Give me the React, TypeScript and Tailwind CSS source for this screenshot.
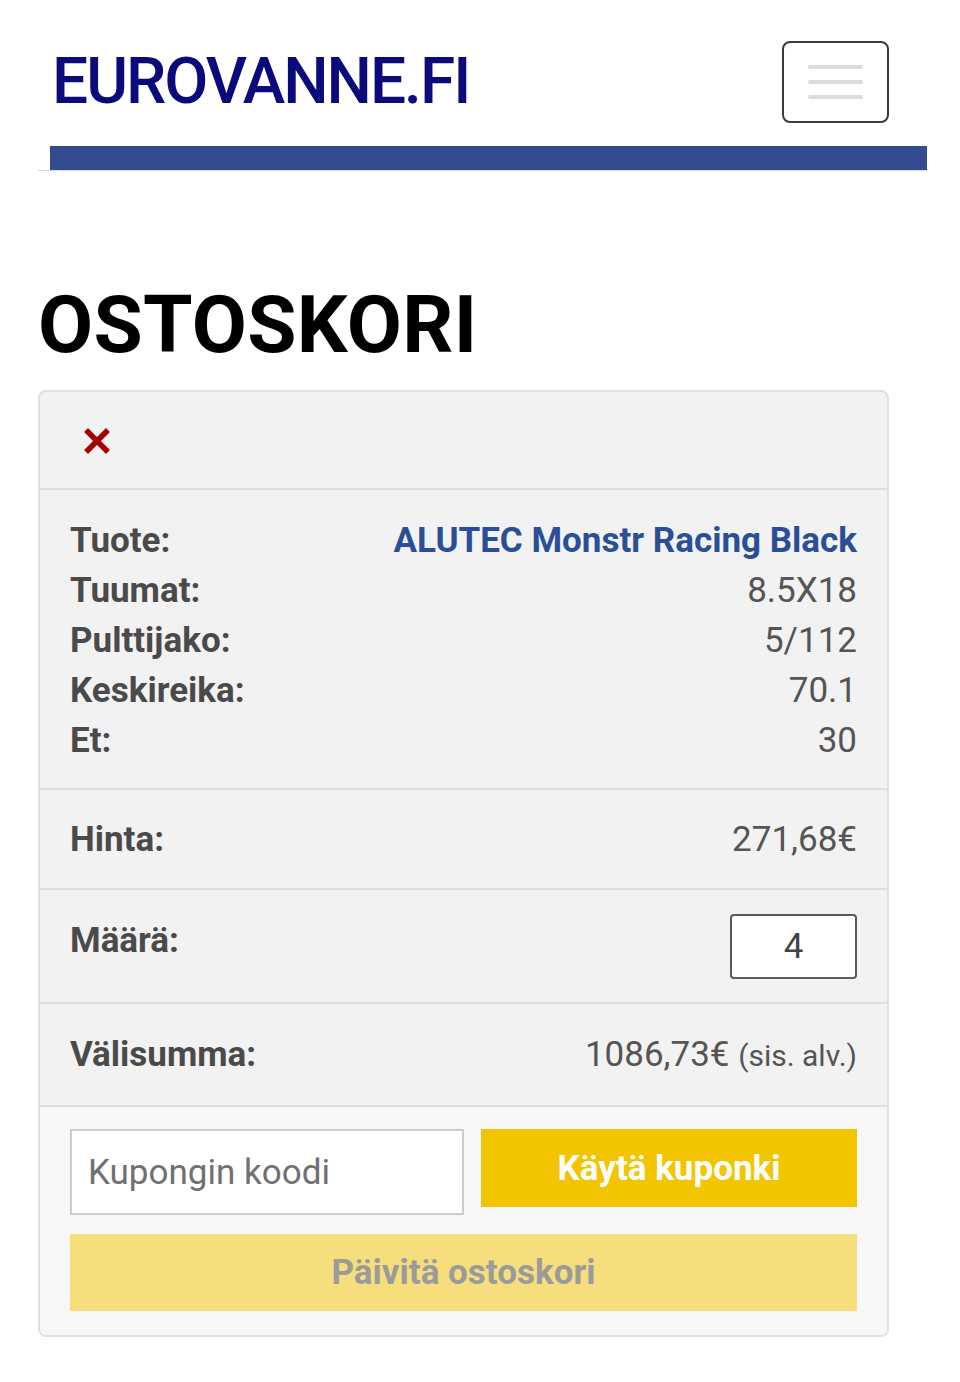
import type {ReactElement} from "react";

const specs = [
    {label: "Tuote:", value: "ALUTEC Monstr Racing Black", link: true},
    {label: "Tuumat:", value: "8.5X18"},
    {label: "Pulttijako:", value: "5/112"},
    {label: "Keskireika:", value: "70.1"},
    {label: "Et:", value: "30"},
];

export default function App(): ReactElement {
    return (
        <div className="min-h-[1382px] bg-white font-['Roboto',sans-serif]">
            {/* Header */}
            <div className="ml-[38px] w-[889px] border-b border-[#d8d8d8]">
                <div className="flex items-center justify-between pl-[14px] pr-[38px] pt-[41px] pb-[23px]">
                    <div className="text-[64px] font-medium leading-none tracking-[-2px] text-[#0b0a7c]">EUROVANNE.FI</div>
                    <button type="button" className="flex h-[82px] w-[107px] flex-col items-center justify-center gap-[11px] rounded-[8px] border-2 border-[#3a3a3a] bg-white">
                        <span className="block h-[4px] w-[55px] rounded bg-[#dcdcdc]" />
                        <span className="block h-[4px] w-[55px] rounded bg-[#dcdcdc]" />
                        <span className="block h-[4px] w-[55px] rounded bg-[#dcdcdc]" />
                    </button>
                </div>
                <div className="ml-[12px] h-[24px] bg-[#324c8f]" />
            </div>

            <div className="px-[38px]">
                <h1 className="mt-[114px] text-[80px] font-bold leading-none tracking-[0.3px] text-black">OSTOSKORI</h1>

                {/* Cart card */}
                <div className="mt-[25px] w-[851px] overflow-hidden rounded-[8px] border-2 border-[#e0e0e0] bg-[#f2f2f2] text-[35px]">
                    <div className="flex h-[98px] items-center border-b-2 border-[#dddddd] px-[44px]">
                        <svg width="26" height="26" viewBox="0 0 26 26" className="mt-[1px]">
                            <path d="M4 4 L22 22 M22 4 L4 22" stroke="#a60000" strokeWidth="5.5" strokeLinecap="square" />
                        </svg>
                    </div>

                    <div className="border-b-2 border-[#dddddd] px-[30px] pt-[26px] pb-[22px] leading-[50px]">
                        {specs.map((s) => (
                            <div key={s.label} className="flex justify-between">
                                <span className="font-bold text-[#4a4a4a]">{s.label}</span>
                                <span className={s.link ? "font-bold text-[#2a4f96]" : "text-[#555555]"}>{s.value}</span>
                            </div>
                        ))}
                    </div>

                    <div className="flex h-[100px] items-center justify-between border-b-2 border-[#dddddd] px-[30px] pt-[3px]">
                        <span className="font-bold text-[#4a4a4a]">Hinta:</span>
                        <span className="text-[#555555]">271,68€</span>
                    </div>

                    <div className="flex h-[114px] items-start justify-between border-b-2 border-[#dddddd] px-[30px] pt-[24px]">
                        <span className="mt-[2px] font-bold leading-[50px] text-[#4a4a4a]">Määrä:</span>
                        <div className="flex h-[65px] w-[127px] items-center justify-center rounded-[4px] border-2 border-[#5a5a5a] bg-white pt-[2px] text-[#444444]">4</div>
                    </div>

                    <div className="flex h-[103px] items-center justify-between border-b-2 border-[#dddddd] px-[30px] pt-[2px]">
                        <span className="font-bold text-[#4a4a4a]">Välisumma:</span>
                        <span className="text-[#555555]">
                            1086,73€ <span className="text-[30px]">(sis. alv.)</span>
                        </span>
                    </div>

                    <div className="bg-[#f7f7f7] px-[30px] pt-[22px] pb-[24px]">
                        <div className="flex items-start gap-[17px]">
                            <div className="flex h-[86px] w-[394px] items-center border-2 border-[#cccccc] bg-white px-[16px] pt-[2px] text-[#707070]">Kupongin koodi</div>
                            <button type="button" className="h-[78px] flex-1 bg-[#f2c500] pt-[2px] text-[35px] font-bold text-white">Käytä kuponki</button>
                        </div>
                        <button type="button" className="mt-[19px] h-[77px] w-full bg-[#f5de7b] pt-[2px] text-[35px] font-bold text-[#9b9b9b]">Päivitä ostoskori</button>
                    </div>
                </div>
            </div>
        </div>
    );
}
